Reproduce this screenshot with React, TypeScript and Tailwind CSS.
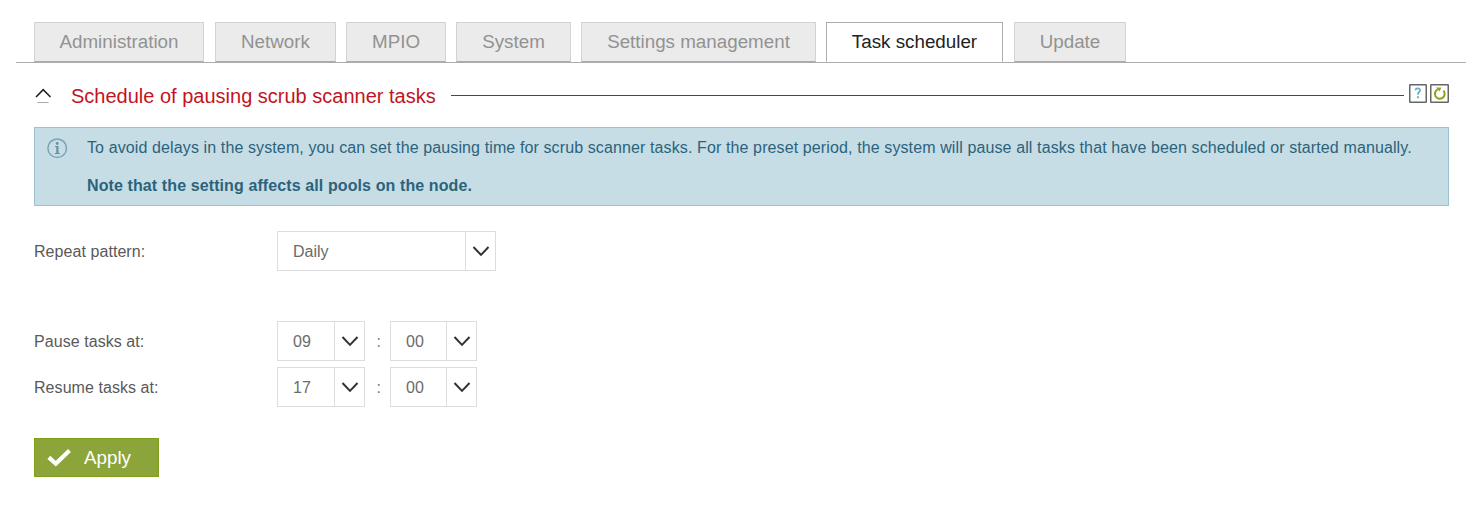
const tabs = [
  { label: "Administration", size: "w-[170px] mr-[11px]" },
  { label: "Network", size: "w-[121px] mr-[10px]" },
  { label: "MPIO", size: "w-[100px] mr-[10px]" },
  { label: "System", size: "w-[115px] mr-[10px]" },
  { label: "Settings management", size: "w-[235px] mr-[10px]" },
  { label: "Task scheduler", size: "w-[177px] mr-[11px]", active: true },
  { label: "Update", size: "w-[112px]" },
];

function Select({ value, className }: { value: string; className: string }) {
  return (
    <button className={`flex h-10 border border-[#dddddd] bg-white text-left ${className}`}>
      <span className="flex h-full flex-1 items-center pt-px pl-[15px] text-[#6b6b6b]">{value}</span>
      <span className="flex h-full w-[30px] items-center justify-center border-l border-[#dddddd]">
        <svg width="18" height="12" viewBox="0 0 18 12" fill="none" stroke="#333333" strokeWidth="2">
          <path d="M1.5 2 9 9.9l7.5-7.9" />
        </svg>
      </span>
    </button>
  );
}

function TimeRow({ label, hour, minute }: { label: string; hour: string; minute: string }) {
  return (
    <div className="flex h-10 items-center">
      <span className="w-[243px] pt-[2px] tracking-[0.06px]">{label}</span>
      <Select value={hour} className="w-[88px]" />
      <span className="w-[25px] pt-[2px] pl-[11.5px] text-[#777777]">:</span>
      <Select value={minute} className="w-[87px]" />
    </div>
  );
}

export default function App() {
  return (
    <main className="h-[526px] w-[1474px] bg-white pt-[22px] font-['Liberation_Sans',Arial,sans-serif] text-base text-[#595959]">
      <nav className="ml-4 flex h-[41px] w-[1450px] border-b border-[#acacac] pl-[18px]">
        {tabs.map((tab) => (
          <button
            key={tab.label}
            className={`h-10 border pt-px text-[18.8px] leading-none ${tab.size} ${
              tab.active
                ? "border-[#acacac] border-b-white bg-white text-[#222222]"
                : "border-[#d3d3d3] border-b-[#acacac] bg-[#ebebeb] text-[#929292]"
            }`}
          >
            {tab.label}
          </button>
        ))}
      </nav>

      <section className="ml-[34px] w-[1415px]">
        <header className="flex h-16 items-center">
          <svg className="mr-[19px]" width="18" height="18" viewBox="0 0 18 18" fill="none">
            <path d="M2 11 9.2 3.7l7.3 7.3" stroke="#222222" strokeWidth="1.6" />
            <path d="M3.5 16.5h11" stroke="#aaaaaa" />
          </svg>
          <h1 className="w-[380px] pt-px text-[20px] leading-6 whitespace-nowrap text-[#c3131f]">
            Schedule of pausing scrub scanner tasks
          </h1>
          <span className="h-px w-[953px] bg-[#b8151d]" />
          <span className="mb-[3px] ml-[5px] flex gap-[3px]">
            <svg width="18" height="19" viewBox="0 0 18 19" fill="none">
              <rect x=".75" y=".75" width="16.5" height="17.5" rx=".5" stroke="#666666" strokeWidth="1.5" />
              <path d="M6.5 6.3c.2-2.8 4.7-2.6 4.5.2-.1 1.5-2.1 1.7-2.1 4.2" stroke="#65afcb" strokeWidth="1.8" />
              <path d="M8 12.2h1.9v2H8z" fill="#65afcb" />
            </svg>
            <svg width="19" height="19" viewBox="0 0 19 19" fill="none">
              <rect x=".75" y=".75" width="17.5" height="17.5" rx=".5" stroke="#666666" strokeWidth="1.5" />
              <path d="M13.4 6.6a4.9 4.9 0 1 1-5.6-1.2" stroke="#8ba51b" strokeWidth="2" />
              <path d="M6 3.5h5.3l-1.6 4.1z" fill="#8ba51b" />
            </svg>
          </span>
        </header>

        <div className="flex h-[79px] border border-[#9bc2d0] bg-[#c7dde5] text-[#2b637c]">
          <svg className="mt-[10px] ml-3 shrink-0" width="21" height="21" viewBox="0 0 21 21" fill="none">
            <circle cx="10.2" cy="10.2" r="9.3" stroke="#7ba3b4" strokeWidth="1.5" />
            <path d="M8 8h3.5v7H13v1H7.8v-1h1.5V9H8z" fill="#6590a4" />
            <circle cx="10.2" cy="5.5" r="1.4" fill="#6590a4" />
          </svg>
          <div className="ml-[19px] pt-[10px] leading-5 whitespace-nowrap">
            <p className="tracking-[0.115px]">
              To avoid delays in the system, you can set the pausing time for scrub scanner tasks. For the preset
              period, the system will pause all tasks that have been scheduled or started manually.
            </p>
            <p className="mt-[18px] font-bold tracking-[0.105px]">Note that the setting affects all pools on the node.</p>
          </div>
        </div>

        <div className="mt-[25px] flex h-10 items-center">
          <span className="w-[243px] pt-[2px] tracking-[0.06px]">Repeat pattern:</span>
          <Select value="Daily" className="w-[219px]" />
        </div>
        <div className="mt-[50px] flex flex-col gap-1.5">
          <TimeRow label="Pause tasks at:" hour="09" minute="00" />
          <TimeRow label="Resume tasks at:" hour="17" minute="00" />
        </div>

        <button className="mt-[31px] flex h-[39px] w-[125px] items-center border border-[#7f9f19] bg-[#8ba53b] pl-3 text-[18.8px] text-white">
          <svg width="25" height="20" viewBox="0 0 25 20" fill="none">
            <path d="m1.8 9.4 7 6.3L22.5 2.5" stroke="white" strokeWidth="4.2" />
          </svg>
          <span className="ml-3 pt-px">Apply</span>
        </button>
      </section>
    </main>
  );
}
